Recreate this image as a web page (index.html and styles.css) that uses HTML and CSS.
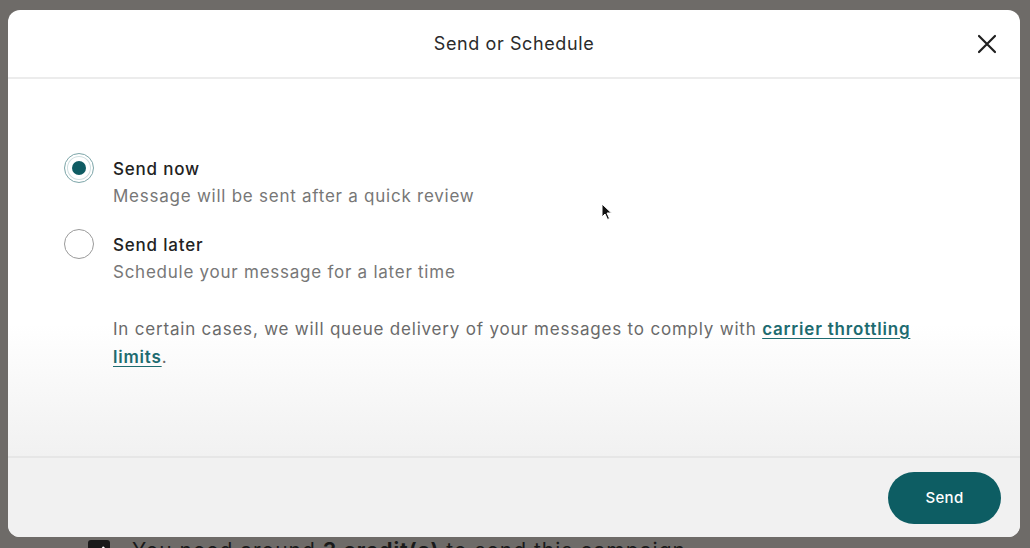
FILE: index.html
```html
<!DOCTYPE html>
<html lang="en">
<head>
    <meta charset="UTF-8">
    <meta name="viewport" content="width=device-width, initial-scale=1.0">
    <title>Send or Schedule</title>
    <link rel="stylesheet" href="styles.css">
</head>
<body>
    <div class="modal">
        <div class="modal-header">
            <span class="modal-title">Send or Schedule</span>
            <button class="close-button" aria-label="Close">
                <svg width="20" height="20" viewBox="0 0 20 20">
                    <path d="M2 2 L18 18 M18 2 L2 18" stroke="#1f1f1f" stroke-width="2.2" stroke-linecap="round"/>
                </svg>
            </button>
        </div>

        <div class="modal-body">
            <!-- Options -->
            <label class="option">
                <span class="radio checked"><span class="dot"></span></span>
                <span class="option-text">
                    <span class="option-title">Send now</span>
                    <span class="option-desc">Message will be sent after a quick review</span>
                </span>
            </label>

            <label class="option">
                <span class="radio"></span>
                <span class="option-text">
                    <span class="option-title">Send later</span>
                    <span class="option-desc">Schedule your message for a later time</span>
                </span>
            </label>

            <p class="note">In certain cases, we will queue delivery of your messages to comply with <a href="#">carrier throttling limits</a>.</p>

            <svg class="cursor" width="12" height="18" viewBox="0 0 12 18">
                <path d="M1 1 L1 14 L4 11 L6.5 16.5 L8.5 15.5 L6 10 L10.5 10 Z" fill="#111" stroke="#fff" stroke-width="1"/>
            </svg>
        </div>

        <div class="modal-footer">
            <button class="send-button">Send</button>
        </div>
    </div>

    <div class="behind">
        <span class="check">
            <svg width="14" height="14" viewBox="0 0 14 14"><path d="M2 7 L6 11 L12 3" stroke="#fff" stroke-width="2.4" fill="none"/></svg>
        </span>
        <span>You need around <b>3 credit(s)</b> to send this campaign.</span>
    </div>
</body>
</html>
```

FILE: styles.css
```css
/* Global Styles */
html, body {
    margin: 0;
    padding: 0;
    height: 548px;
    overflow: hidden;
}

body {
    font-family: Inter, 'Noto Sans', sans-serif;
    background-color: #6e6b68;
    padding-top: 10px;
    box-sizing: border-box;
}

/* Modal */
.modal {
    margin-left: 8px;
    width: 1012px;
    height: 527px;
    background-color: #fff;
    border-radius: 12px;
    display: flex;
    flex-direction: column;
    overflow: hidden;
}

.modal-header {
    height: 67px;
    border-bottom: 2px solid #ececec;
    display: flex;
    align-items: center;
    justify-content: center;
    position: relative;
}

.modal-title {
    font-size: 18px;
    color: #2b2b2b;
    letter-spacing: 0.6px;
}

.close-button {
    position: absolute;
    right: 23px;
    top: 24px;
    background: none;
    border: none;
    padding: 0;
    width: 20px;
    height: 20px;
    cursor: pointer;
}

/* Body */
.modal-body {
    flex-grow: 1;
    padding: 74px 100px 0 56px;
    background: linear-gradient(to bottom, #fff 0%, #fff 65%, #f1f1f1 100%);
    border-bottom: 2px solid #e6e6e6;
    position: relative;
}

.option {
    display: flex;
    align-items: flex-start;
    gap: 19px;
    margin-bottom: 18px;
    cursor: pointer;
}

.radio {
    width: 28px;
    height: 28px;
    border: 1.5px solid #9a9a9a;
    border-radius: 50%;
    display: flex;
    align-items: center;
    justify-content: center;
    flex-shrink: 0;
}

.radio.checked {
    border-color: #7fa7aa;
    box-shadow: inset 0 0 0 2px #fff, inset 0 0 0 3px #cfdfe0;
}

.radio .dot {
    width: 14px;
    height: 14px;
    border-radius: 50%;
    background-color: #0f5c63;
}

.option-text {
    display: flex;
    flex-direction: column;
}

.option-title {
    font-size: 17px;
    font-weight: 500;
    color: #222;
    line-height: 24px;
    margin-top: 4px;
    letter-spacing: 0.8px;
}

.option-desc {
    font-size: 17px;
    color: #777;
    line-height: 30px;
    letter-spacing: 0.75px;
}

.note {
    margin: 28px 0 0 49px;
    font-size: 17px;
    line-height: 28px;
    color: #6a6a6a;
    max-width: 805px;
    letter-spacing: 0.8px;
}

.note a {
    color: #1d6b70;
    font-weight: 600;
    text-decoration: underline;
    text-underline-offset: 3px;
}

.cursor {
    position: absolute;
    left: 593px;
    top: 124px;
}

/* Footer */
.modal-footer {
    height: 79px;
    background-color: #f1f1f1;
    display: flex;
    align-items: center;
    justify-content: flex-end;
    padding-right: 19px;
}

.send-button {
    background-color: #0d5d63;
    color: #fff;
    width: 113px;
    height: 52px;
    border: none;
    border-radius: 26px;
    font-family: inherit;
    font-size: 15px;
    font-weight: 500;
    letter-spacing: 0.3px;
    cursor: pointer;
}

/* Content behind the modal */
.behind {
    display: flex;
    align-items: center;
    gap: 22px;
    margin: 2px 0 0 88px;
    font-size: 21px;
    color: #1a1a1a;
    line-height: 24px;
    letter-spacing: 1px;
}

.check {
    width: 22px;
    height: 22px;
    background-color: #1a1a1a;
    border-radius: 3px;
    display: flex;
    align-items: center;
    justify-content: center;
}
```
